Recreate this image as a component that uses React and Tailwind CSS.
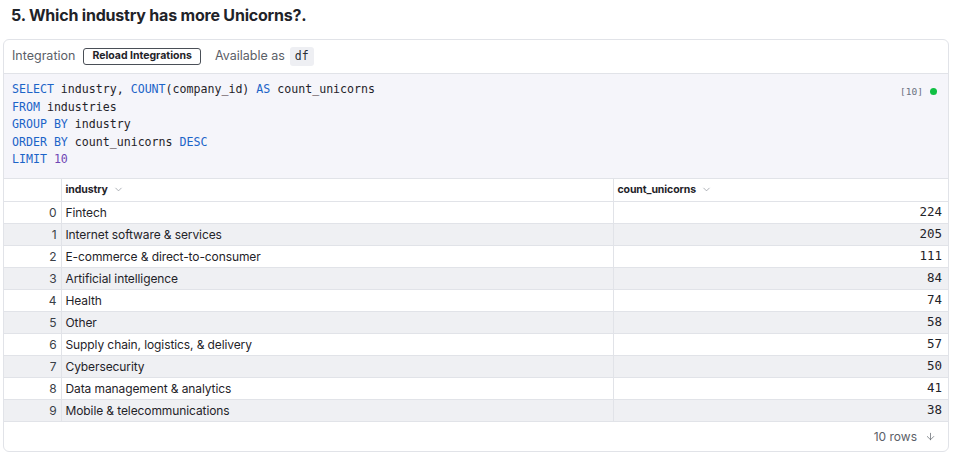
import React from 'react'
import { ChevronDown, ArrowDown } from 'lucide-react'

const rows = [
  ['Fintech', 224],
  ['Internet software & services', 205],
  ['E-commerce & direct-to-consumer', 111],
  ['Artificial intelligence', 84],
  ['Health', 74],
  ['Other', 58],
  ['Supply chain, logistics, & delivery', 57],
  ['Cybersecurity', 50],
  ['Data management & analytics', 41],
  ['Mobile & telecommunications', 38]
]

const sans = "font-['Inter','Noto_Sans',sans-serif]"
const mono = "font-['DejaVu_Sans_Mono','Liberation_Mono',monospace]"

const Kw = ({ children }) => <span className="text-[#1c64c8]">{children}</span>

const App = () => {
  return (
    <div className={`${sans} bg-white text-[#1f2329] w-[954px] h-[455px] overflow-hidden`}>
      <h2 className="text-[16px] font-bold leading-5 pl-[11px] pt-[5px] tracking-[-0.2px]">
        5. Which industry has more Unicorns?.
      </h2>
      <div className="ml-[3px] mt-[14px] w-[946px] border border-[#e1e3e8] rounded-[6px] overflow-hidden">
        <div className="h-[34px] flex items-center pl-[8px] text-[12.5px] text-[#5b6068] border-b border-[#e1e3e8]">
          <span>Integration</span>
          <button className="ml-[8px] h-[17px] px-[8px] border border-[#4a4f57] rounded-[3px] text-[10.5px] font-bold text-[#1f2329] leading-none">
            Reload Integrations
          </button>
          <span className="ml-[14px]">Available as</span>
          <span className={`${mono} ml-[5px] bg-[#eeeff3] rounded-[3px] px-[5px] py-[1px] text-[11.5px] text-[#2a2e35]`}>df</span>
        </div>
        <div className={`${mono} relative bg-[#f5f5fa] px-2 pt-[7px] pb-[9px] text-[11.6px] leading-[17.5px] text-[#1f2329] border-b border-[#e1e3e8]`}>
          <div><Kw>SELECT</Kw> industry, <Kw>COUNT</Kw>(company_id) <Kw>AS</Kw> count_unicorns</div>
          <div><Kw>FROM</Kw> industries</div>
          <div><Kw>GROUP BY</Kw> industry</div>
          <div><Kw>ORDER BY</Kw> count_unicorns <Kw>DESC</Kw></div>
          <div><Kw>LIMIT</Kw> <span className="text-[#7046b4]">10</span></div>
          <div className="absolute right-[11px] top-[9px] flex items-center gap-[7px] text-[9.5px] text-[#6b7280]">
            <span>[10]</span>
            <span className="w-[7px] h-[7px] rounded-full bg-[#10c043]" />
          </div>
        </div>
        <table className="w-full border-collapse text-[12px] tracking-[-0.1px]">
          <thead>
            <tr className="h-[23px] border-b border-[#e1e3e8]">
              <th className="w-[57px] border-r border-[#e1e3e8]" />
              <th className="w-[552px] text-left font-bold text-[10.5px] px-[4px] border-r border-[#e1e3e8]">
                <div className="flex items-center gap-[5px]">
                  industry <ChevronDown className="w-[11px] h-[11px] text-[#8a8f98]" strokeWidth={1.5} />
                </div>
              </th>
              <th className="text-left font-bold text-[10.5px] px-[4px]">
                <div className="flex items-center gap-[5px]">
                  count_unicorns <ChevronDown className="w-[11px] h-[11px] text-[#8a8f98]" strokeWidth={1.5} />
                </div>
              </th>
            </tr>
          </thead>
          <tbody>
            {rows.map(([name, count], i) => (
              <tr key={i} className={`h-[22px] border-b border-[#e1e3e8] ${i % 2 === 1 ? 'bg-[#eff0f3]' : 'bg-white'}`}>
                <td className="text-right pr-[4px] text-[#3a3f47] border-r border-[#e1e3e8]">{i}</td>
                <td className="px-[4px] border-r border-[#e1e3e8]">{name}</td>
                <td className={`${mono} text-right pr-[6px] text-[12.5px] tracking-normal`}>{count}</td>
              </tr>
            ))}
          </tbody>
        </table>
        <div className="h-[29px] flex items-center justify-end pr-[12px] gap-[8px] text-[12px] text-[#5b6068]">
          <span>10 rows</span>
          <ArrowDown className="w-[11px] h-[11px]" strokeWidth={1.5} />
        </div>
      </div>
    </div>
  )
}

export default App
